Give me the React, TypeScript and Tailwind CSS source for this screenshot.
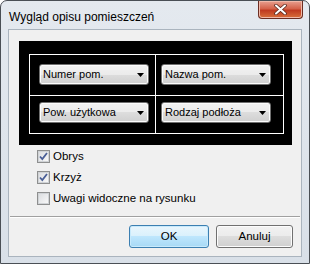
import React from "react";

const sans = "font-['Liberation_Sans',Arial,sans-serif]";

function Combo({ label }: { label: string }) {
  return (
    <div className="flex h-[21px] w-[110px] items-center justify-between rounded-[3px] border border-[#707070] bg-[linear-gradient(#f2f2f2,#ebebeb_50%,#dddddd_50%,#cfcfcf)] pr-[4px] pl-[3px] text-[11px] text-black shadow-[inset_0_0_0_1px_#fcfcfc]">
      <span>{label}</span>
      <svg width="7" height="4" viewBox="0 0 7 4">
        <path d="M0 0h7L3.5 4z" fill="#000" />
      </svg>
    </div>
  );
}

function Check({ label, checked }: { label: string; checked?: boolean }) {
  return (
    <div className="flex h-[13px] items-center gap-[3px] text-[11.5px] leading-[13px] text-black">
      <div className="flex h-[13px] w-[13px] items-center justify-center border border-[#8e8f8f] bg-white">
        <div className="flex h-[11px] w-[11px] items-center justify-center border border-[#d0d3d6] bg-[linear-gradient(135deg,#dcdee1,#f8f8f8)]">
          {checked && (
            <svg width="9" height="9" viewBox="0 0 9 9">
              <path
                d="M1 4.5l2.3 2.6L8 1"
                fill="none"
                stroke="#4a5f97"
                strokeWidth="1.8"
              />
            </svg>
          )}
        </div>
      </div>
      <span>{label}</span>
    </div>
  );
}

export default function App() {
  return (
    <div
      className={`${sans} flex h-[264px] w-[310px] flex-col overflow-hidden rounded-t-[7px] border border-[#4a4f55] bg-[linear-gradient(#e4e9ef,#d9e0e8)]`}
    >
      {/* title bar */}
      <div className="flex h-[28px] shrink-0 items-start justify-between pl-[8px] pr-[6px]">
        <span className="mt-[7px] text-[12px] text-black">Wygląd opisu pomieszczeń</span>
        <div className="flex h-[18px] w-[45px] items-center justify-center rounded-b-[4px] border border-t-0 border-[#6b2d22] bg-[linear-gradient(#e8a090,#d4624a_45%,#c03a20_55%,#d8703a)] shadow-[inset_0_0_0_1px_#f0b8a8]">
          <svg width="13" height="11" viewBox="0 0 13 11">
            <path
              d="M2 1.5l9 8M11 1.5l-9 8"
              stroke="#5a2a20"
              strokeWidth="3.6"
              strokeLinecap="round"
            />
            <path
              d="M2 1.5l9 8M11 1.5l-9 8"
              stroke="#fff"
              strokeWidth="2"
              strokeLinecap="round"
            />
          </svg>
        </div>
      </div>

      {/* client area */}
      <div className="mx-[7px] mb-[6px] flex flex-1 flex-col border border-[#aab4be] bg-[#f0f0f0]">
        <div className="ml-[10px] mr-[9px] mt-[11px] h-[104px] shrink-0 bg-black pl-[10px] pt-[13px]">
          <div className="grid w-[255px] grid-cols-[125px_127px] grid-rows-[40px_37px] gap-px bg-white p-px">
            <div className="bg-black pl-[9px] pt-[9px]">
              <Combo label="Numer pom." />
            </div>
            <div className="bg-black pl-[5px] pt-[9px]">
              <Combo label="Nazwa pom." />
            </div>
            <div className="bg-black pl-[9px] pt-[6px]">
              <Combo label="Pow. użytkowa" />
            </div>
            <div className="bg-black pl-[5px] pt-[6px]">
              <Combo label="Rodzaj podłoża" />
            </div>
          </div>
        </div>

        <div className="ml-[28px] mt-[5px] flex flex-col gap-[8px]">
          <Check label="Obrys" checked />
          <Check label="Krzyż" checked />
          <Check label="Uwagi widoczne na rysunku" />
        </div>

        <div className="mx-[1px] mt-[11px] h-[2px] shrink-0 border-t border-b border-t-[#a0a0a0] border-b-white" />

        <div className="mt-[7px] flex justify-end gap-[7px] pr-[8px]">
          <button className="h-[23px] w-[80px] rounded-[3px] border border-[#3c7fb1] bg-[linear-gradient(#eaf6fd,#d9f0fc_50%,#bee6fd_50%,#a7d9f5)] text-[11.5px] text-black shadow-[inset_0_0_0_1px_#c8eafc]">
            OK
          </button>
          <button className="h-[23px] w-[77px] rounded-[3px] border border-[#707070] bg-[linear-gradient(#f2f2f2,#ebebeb_50%,#dddddd_50%,#cfcfcf)] text-[11.5px] text-black shadow-[inset_0_0_0_1px_#fcfcfc]">
            Anuluj
          </button>
        </div>
      </div>
    </div>
  );
}
